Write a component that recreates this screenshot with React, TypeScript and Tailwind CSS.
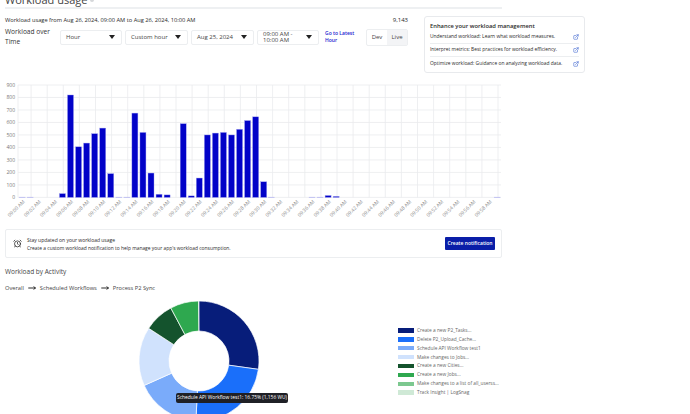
import { AlarmClock, ExternalLink, MoveRight } from "lucide-react";

const values: Record<number, number> = {
  0: 2, 1: 2, 5: 30, 6: 820, 7: 405, 8: 435, 9: 510, 10: 555, 11: 190, 12: 2, 13: 2,
  14: 675, 15: 520, 16: 195, 17: 25, 18: 20, 20: 590, 21: 12, 22: 155, 23: 500, 24: 515,
  25: 520, 26: 500, 27: 545, 28: 615, 29: 645, 30: 125, 31: 2, 36: 2, 37: 2, 38: 15, 39: 8, 59: 2,
};

const dropdowns = [
  { label: "Hour", width: "w-[62px]" },
  { label: "Custom hour", width: "w-[63px]" },
  { label: "Aug 25, 2024", width: "w-[63px]" },
  { label: "09:00 AM - 10:00 AM", width: "w-[62px]" },
];

const tips = [
  ["Understand workload:", "Learn what workload measures."],
  ["Interpret metrics:", "Best practices for workload efficiency."],
  ["Optimize workload:", "Guidance on analyzing workload data."],
];

const legend = [
  ["#071d7a", "Create a new P2_Tasks..."],
  ["#1a6ffa", "Delete P2_Upload_Cache..."],
  ["#7aabfa", "Schedule API Workflow test1"],
  ["#d0e2fd", "Make changes to Jobs..."],
  ["#14532d", "Create a new Cities..."],
  ["#2ea84f", "Create a new Jobs..."],
  ["#7cc88f", "Make changes to a list of all_userss..."],
  ["#cfe9d6", "Track Insight | LogSnag"],
];

const slices = [
  { from: 0, to: 98, color: "#071d7a" },
  { from: 98, to: 183, color: "#1a6ffa" },
  { from: 183, to: 246, color: "#7aabfa" },
  { from: 246, to: 303, color: "#d0e2fd" },
  { from: 303, to: 332, color: "#14532d" },
  { from: 332, to: 359.5, color: "#2ea84f" },
];

function point(deg: number, r: number) {
  const a = ((deg - 90) * Math.PI) / 180;
  return `${(60 + r * Math.cos(a)).toFixed(2)} ${(60 + r * Math.sin(a)).toFixed(2)}`;
}

function slicePath(from: number, to: number) {
  const large = to - from > 180 ? 1 : 0;
  return `M${point(from, 60)} A60 60 0 ${large} 1 ${point(to, 60)} L${point(to, 30)} A30 30 0 ${large} 0 ${point(from, 30)} Z`;
}

function Caret() {
  return (
    <svg width="6" height="4" viewBox="0 0 6 4" className="shrink-0">
      <path d="M0 0h6L3 4z" fill="#222" />
    </svg>
  );
}

function UsageChart() {
  const zero = 197.4;
  const scale = 112.4 / 900;
  return (
    <svg viewBox="5 80 497 150" className="block h-[150px] w-[497px]">
      {Array.from({ length: 10 }, (_, i) => {
        const y = zero - i * 100 * scale;
        return (
          <g key={i}>
            <line x1="18" x2="501" y1={y} y2={y} stroke="#eaebee" strokeWidth="0.8" />
            <text x="15" y={y + 1.8} textAnchor="end" fontSize="5" fill="#777">
              {i * 100}
            </text>
          </g>
        );
      })}
      <line x1="18" x2="18" y1="85" y2="197.4" stroke="#eaebee" strokeWidth="0.8" />
      {Array.from({ length: 31 }, (_, i) => i).slice(1).map((i) => {
        const x = 15 + 16.1 * i;
        return <line key={i} x1={x} x2={x} y1="85" y2="197.4" stroke="#eaebee" strokeWidth="0.8" />;
      })}
      {Object.entries(values).map(([key, v]) => {
        const cx = 22.2 + 8.05 * Number(key);
        const h = v * scale;
        return (
          <rect
            key={key}
            x={cx - 3}
            y={zero - h}
            width="6"
            height={h}
            fill={v < 5 ? "#b9b9f0" : "#0202c8"}
            stroke="#9c9cf0"
            strokeWidth="0.4"
          />
        );
      })}
      {Array.from({ length: 30 }, (_, i) => {
        const cx = 22.2 + 16.1 * i;
        const label = `09:${String(i * 2).padStart(2, "0")} AM`;
        return (
          <text
            key={label}
            x={cx + 3}
            y="202"
            fontSize="5"
            fill="#888"
            textAnchor="end"
            transform={`rotate(-45 ${cx + 3} 202)`}
          >
            {label}
          </text>
        );
      })}
    </svg>
  );
}

export default function App() {
  return (
    <div className="h-[414px] w-[690px] overflow-hidden bg-white px-[5px] font-['Open_Sans',sans-serif] text-[#2a2a2a]">
      <div className="-mt-[7px] flex w-[497px] items-center gap-[3px] border-b-2 border-[#eef0f2] pb-[1px] text-[11px] leading-[13px] text-[#444]">
        Workload usage
        <span className="h-[4px] w-[4px] rounded-full bg-[#d5d7da]" />
      </div>

      <div className="flex items-start">
        <div className="w-[403px] pt-[6px]">
          <div className="flex justify-between text-[5.7px] leading-[10px]">
            <span>Workload usage from Aug 26, 2024, 09:00 AM to Aug 26, 2024, 10:00 AM</span>
            <span className="text-[6px]">9,143</span>
          </div>
          <div className="mt-[2px] flex items-center">
            <div className="w-[55px] text-[6.6px] leading-[10px] text-[#333]">
              Workload over
              <br />
              Time
            </div>
            <div className="flex gap-[3px]">
              {dropdowns.map((d) => (
                <div
                  key={d.label}
                  className={`${d.width} flex h-[15px] items-center justify-between rounded-[2px] border border-[#eceef0] pl-[5px] pr-[6px] text-[6px] leading-[6px] text-[#444]`}
                >
                  <span className={d.label.length > 15 ? "w-[32px]" : ""}>{d.label}</span>
                  <Caret />
                </div>
              ))}
            </div>
            <div className="ml-[6px] w-[36px] text-[5px] font-semibold leading-[7px] text-[#1a1ad0]">
              Go to Latest Hour
            </div>
            <div className="ml-[5px] flex h-[17px] w-[42px] items-center rounded-[2px] border border-[#eceef0] text-[6px] text-[#444]">
              <span className="flex h-full flex-1 items-center justify-center">Dev</span>
              <span className="flex h-full flex-1 items-center justify-center bg-[#f3f4f6]">Live</span>
            </div>
          </div>
        </div>

        <div className="ml-[16px] mt-[7px] h-[57px] w-[161px] rounded-[3px] border border-[#e8eaed] px-[5px] pt-[5px]">
          <div className="text-[5.8px] font-semibold leading-[8px]">Enhance your workload management</div>
          <div className="mt-[1px]">
            {tips.map(([strong, rest], i) => (
              <div
                key={strong}
                className={`flex h-[13px] items-center justify-between text-[4.9px] ${i < 2 ? "border-b border-[#eceef0]" : ""}`}
              >
                <span className="whitespace-nowrap">
                  <span className="font-medium">{strong}</span> {rest}
                </span>
                <ExternalLink className="h-[6px] w-[6px] shrink-0 text-[#2450c8]" strokeWidth={2} />
              </div>
            ))}
          </div>
        </div>
      </div>

      <div className="mt-[7px]">
        <UsageChart />
      </div>

      <div className="-mt-[1px] flex h-[29px] w-[497px] items-center rounded-[2px] border border-[#eceef0] pl-[7px] pr-[6px]">
        <AlarmClock className="h-[9px] w-[9px] text-[#222]" strokeWidth={2} />
        <div className="ml-[5px] flex-1">
          <div className="text-[5px] font-medium leading-[8px]">Stay updated on your workload usage</div>
          <div className="text-[4.9px] leading-[8px]">
            Create a custom workload notification to help manage your app&apos;s workload consumption.
          </div>
        </div>
        <div className="flex h-[13px] w-[50px] items-center justify-center rounded-[1px] bg-[#0a1ea8] text-[5px] font-semibold text-white">
          Create notification
        </div>
      </div>

      <div className="mt-[9px] text-[6.5px] leading-[10px] text-[#444]">Workload by Activity</div>
      <div className="mt-[7px] flex items-center text-[5.7px] leading-[8px] text-[#444]">
        <span>Overall</span>
        <MoveRight className="mx-[3px] h-[8px] w-[10px] text-black" strokeWidth={2.5} />
        <span>Scheduled Workflows</span>
        <MoveRight className="mx-[3px] h-[8px] w-[10px] text-black" strokeWidth={2.5} />
        <span>Process P2 Sync</span>
      </div>

      <div className="relative mt-[9px] flex items-start pl-[134px]">
        <svg viewBox="0 0 120 120" className="h-[120px] w-[120px] shrink-0">
          {slices.map((s) => (
            <path key={s.color} d={slicePath(s.from, s.to)} fill={s.color} stroke="#fff" strokeWidth="0.7" />
          ))}
        </svg>
        <div className="ml-[139px] mt-[25px]">
          {legend.map(([color, label]) => (
            <div key={label} className="flex h-[8.9px] items-center gap-[3px] text-[4.8px] text-[#666]">
              <span className="h-[4.5px] w-[16px]" style={{ backgroundColor: color }} />
              <span className="whitespace-nowrap">{label}</span>
            </div>
          ))}
        </div>
        <div className="absolute left-[171px] top-[92px] flex h-[10px] w-[112px] items-center justify-center whitespace-nowrap rounded-[2px] bg-[#1f2026] text-[4.9px] font-medium text-white">
          Schedule API Workflow test1: 16.75% (1,156 WU)
        </div>
      </div>
    </div>
  );
}
